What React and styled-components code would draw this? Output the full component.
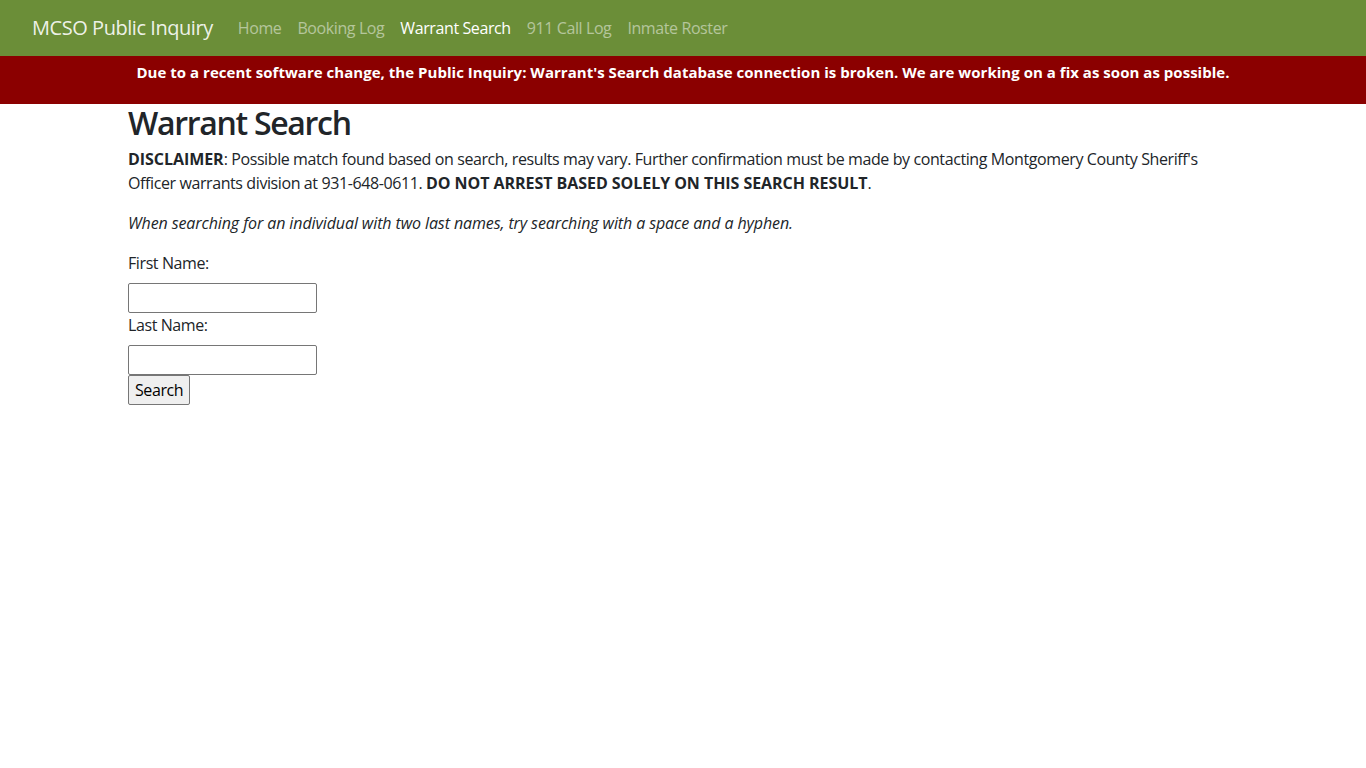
import React from "react";
import styled, { createGlobalStyle } from "styled-components";

const Global = createGlobalStyle`
  *, *::before, *::after { box-sizing: border-box; }
  html, body { margin: 0; padding: 0; }
  body {
    font-family: "Open Sans", "Noto Sans", sans-serif;
    font-size: 16px;
    line-height: 1.5;
    color: #212529;
    background: #fff;
  }
`;

const Navbar = styled.nav`
  display: flex;
  align-items: center;
  height: 56px;
  padding: 8px 16px 8px 32px;
  background: #6b8e38;
`;

const Brand = styled.a`
  font-size: 20px;
  line-height: 30px;
  color: rgba(255, 255, 255, 0.9);
  margin-right: 17px;
  text-decoration: none;
  letter-spacing: -0.45px;
`;

const NavList = styled.ul`
  display: flex;
  list-style: none;
  margin: 0;
  padding: 0;
`;

const NavLink = styled.a`
  display: block;
  padding: 8px 8px;
  font-size: 16px;
  line-height: 24px;
  text-decoration: none;
  letter-spacing: -0.4px;
  color: ${(p) => (p.$active ? "#fff" : "rgba(255,255,255,0.5)")};
`;

const Banner = styled.div`
  background: #8b0000;
  color: #fff;
  font-weight: 700;
  font-size: 15px;
  text-align: center;
  height: 48px;
  padding-top: 5px;
  letter-spacing: 0.03px;
`;

const Container = styled.main`
  max-width: 1140px;
  margin: 0 auto;
  padding: 0 15px;
`;

const Title = styled.h2`
  font-size: 32px;
  font-weight: 600;
  line-height: 1.2;
  margin: 0 0 5px;
  letter-spacing: -1.3px;
`;

const Para = styled.p`
  margin: 0 0 16px;
  letter-spacing: ${(p) => (p.$italic ? "-0.1px" : "-0.4px")};
  font-style: ${(p) => (p.$italic ? "italic" : "normal")};
`;

const Strong = styled.b`
  font-weight: 700;
  letter-spacing: -0.05px;
`;

const Form = styled.form`
  display: flex;
  flex-direction: column;
  align-items: flex-start;
`;

const Label = styled.label`
  display: inline-block;
  margin-bottom: 8px;
  letter-spacing: -0.4px;
`;

const Input = styled.input`
  width: 189px;
  height: 30px;
  border: 1px solid #767676;
  border-radius: 2px;
  padding: 1px 2px;
  font-size: 16px;
  font-family: inherit;
  background: #fff;
`;

const Button = styled.button`
  height: 30px;
  padding: 1px 6px;
  font-size: 16px;
  font-family: inherit;
  color: #000;
  background: #efefef;
  border: 1px solid #767676;
  border-radius: 2px;
  letter-spacing: -0.4px;
`;

export default function App() {
  const links = ["Home", "Booking Log", "Warrant Search", "911 Call Log", "Inmate Roster"];
  return (
    <>
      <Global />
      <Navbar>
        <Brand href="#">MCSO Public Inquiry</Brand>
        <NavList>
          {links.map((l) => (
            <li key={l}>
              <NavLink href="#" $active={l === "Warrant Search"}>{l}</NavLink>
            </li>
          ))}
        </NavList>
      </Navbar>
      <Banner>
        Due to a recent software change, the Public Inquiry: Warrant's Search database connection is broken. We are working on a fix as soon as possible.
      </Banner>
      <Container>
        <Title>Warrant Search</Title>
        <Para>
          <Strong>DISCLAIMER</Strong>: Possible match found based on search, results may vary. Further confirmation must be made by contacting Montgomery County Sheriff's Officer warrants division at 931-648-0611. <Strong>DO NOT ARREST BASED SOLELY ON THIS SEARCH RESULT</Strong>.
        </Para>
        <Para $italic>When searching for an individual with two last names, try searching with a space and a hyphen.</Para>
        <Form onSubmit={(e) => e.preventDefault()}>
          <Label htmlFor="fn">First Name:</Label>
          <Input id="fn" type="text" />
          <Label htmlFor="ln">Last Name:</Label>
          <Input id="ln" type="text" />
          <Button type="submit">Search</Button>
        </Form>
      </Container>
    </>
  );
}
